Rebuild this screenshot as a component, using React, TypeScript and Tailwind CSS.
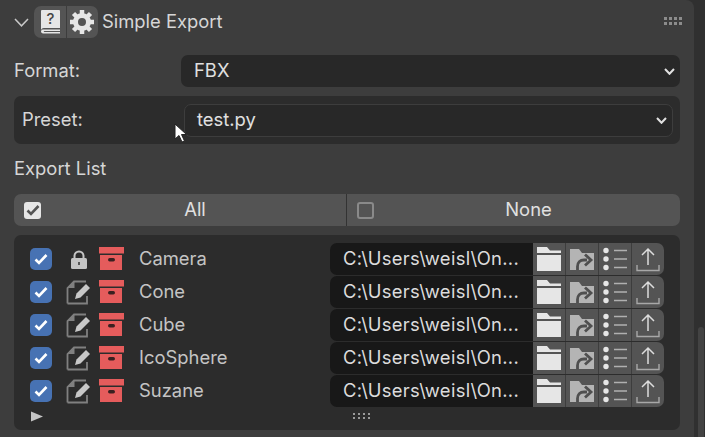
const font = { fontFamily: 'Inter' }

const rows = [
  { name: 'Camera', locked: true },
  { name: 'Cone', locked: false },
  { name: 'Cube', locked: false },
  { name: 'IcoSphere', locked: false },
  { name: 'Suzane', locked: false },
]

function Chevron({ w, h, color, sw }: { w: number; h: number; color: string; sw: number }) {
  return (
    <svg width={w} height={h} viewBox={`0 0 ${w} ${h}`}>
      <path d={`M1 1 ${w / 2} ${h - 1.2} ${w - 1} 1`} fill="none" stroke={color} strokeWidth={sw} />
    </svg>
  )
}

function BookIcon() {
  return (
    <svg width="24" height="26" viewBox="0 0 24 26">
      <path d="M4 1h17a1 1 0 0 1 1 1v17H6a3 3 0 0 0-3 2V2a1 1 0 0 1 1-1z" fill="#e6e6e6" />
      <path d="M3 22.500C3 20.800 4.500 20.500 6 20.500h16v1.400H6.500c-1 0-1 1.200 0 1.200H22v1.400H6c-1.500 0-3-.5-3-2z" fill="#e6e6e6" />
      <text x="12.500" y="15" textAnchor="middle" fontSize="15" fontWeight="500" fill="#444" fontFamily="Inter">?</text>
    </svg>
  )
}

function GearIcon() {
  return (
    <svg width="26" height="26" viewBox="0 0 26 26">
      <circle cx="13" cy="13" r="6.500" fill="none" stroke="#e6e6e6" strokeWidth="5" />
      <g stroke="#e6e6e6" strokeWidth="4.500">
        <path d="M13 1v5M13 20v5M1 13h5M20 13h5M4.500 4.500l3.500 3.500M18 18l3.500 3.500M21.500 4.500 18 8M8 18l-3.500 3.500" />
      </g>
    </svg>
  )
}

function GripIcon() {
  return (
    <svg width="20" height="10" viewBox="0 0 20 10">
      <g fill="#8c8c8c">
        <rect x="1" y="0" width="3" height="3" />
        <rect x="6" y="0" width="3" height="3" />
        <rect x="11" y="0" width="3" height="3" />
        <rect x="16" y="0" width="3" height="3" />
        <rect x="1" y="5" width="3" height="3" />
        <rect x="6" y="5" width="3" height="3" />
        <rect x="11" y="5" width="3" height="3" />
        <rect x="16" y="5" width="3" height="3" />
      </g>
    </svg>
  )
}

function CheckMark({ color }: { color: string }) {
  return (
    <svg width="14" height="12" viewBox="0 0 14 12">
      <path d="M1.500 6.500 5 10l7.500-8" fill="none" stroke={color} strokeWidth="2.600" />
    </svg>
  )
}

function LockIcon() {
  return (
    <svg width="18" height="20" viewBox="0 0 18 20">
      <path d="M4.500 9V6a4.500 4.500 0 0 1 9 0v3" fill="none" stroke="#c4c4c4" strokeWidth="2" />
      <rect x="1" y="8" width="16" height="11" rx="1.500" fill="#c4c4c4" />
      <rect x="8" y="12" width="2" height="3" fill="#555" />
    </svg>
  )
}

function EditIcon() {
  return (
    <svg width="26" height="25" viewBox="0 0 26 25">
      <path d="M1.500 23.500V8L8 1.500h12" fill="none" stroke="#808080" strokeWidth="1.800" />
      <path d="M1.500 23.500H21V16" fill="none" stroke="#808080" strokeWidth="1.800" />
      <path d="M2 8h6.500V1.500z" fill="#808080" />
      <path d="M9 19l1.500-5.500L20 4l4 4-9.500 9.500z" fill="#c8c8c8" />
    </svg>
  )
}

function BoxIcon() {
  return (
    <svg width="25" height="23" viewBox="0 0 25 23">
      <rect x="0" y="0" width="25" height="6.500" fill="#e55c5c" />
      <rect x="1" y="8" width="22" height="15" fill="#e55c5c" />
      <rect x="9" y="11" width="7" height="3.500" rx="1.700" fill="#3a2020" />
    </svg>
  )
}

function FolderIcon() {
  return (
    <svg width="26" height="24" viewBox="0 0 26 24">
      <path d="M1 0h10l3 3.500h11V6H1z" fill="#e6e6e6" />
      <rect x="1" y="8" width="24" height="16" fill="#e6e6e6" />
    </svg>
  )
}

function LinkFolderIcon() {
  return (
    <svg width="26" height="23" viewBox="0 0 26 23">
      <path d="M1 1h9l3 4h12v17H1z" fill="#b4b4b4" />
      <path d="M8.500 22v-3.500c0-4 2.500-6.500 6.500-6.500h3" fill="none" stroke="#4f4f4f" strokeWidth="2.800" />
      <path d="M16 6.500l6 5.500-6 5.500" fill="none" stroke="#4f4f4f" strokeWidth="2.800" />
    </svg>
  )
}

function ListIcon() {
  return (
    <svg width="26" height="24" viewBox="0 0 26 24">
      <g fill="#e6e6e6">
        <circle cx="4" cy="3.500" r="2.700" />
        <circle cx="4" cy="12" r="2.700" />
        <circle cx="4" cy="20.500" r="2.700" />
      </g>
      <path d="M12 3.500h13M12 12h13M12 20.500h13" stroke="#b0b0b0" strokeWidth="1.400" />
    </svg>
  )
}

function UploadIcon() {
  return (
    <svg width="24" height="25" viewBox="0 0 24 25">
      <path d="M12 18V2M6 8l6-6 6 6" fill="none" stroke="#dcdcdc" strokeWidth="1.500" />
      <path d="M1 18v5.500h22V18" fill="none" stroke="#a8a8a8" strokeWidth="1.400" />
    </svg>
  )
}

function Row({ name, locked }: { name: string; locked: boolean }) {
  return (
    <div className="flex h-[33px] items-center">
      <div className="mb-[2px] ml-[16px] flex h-[22px] w-[22px] items-center justify-center rounded-[5px] bg-[#4772b3]">
        <CheckMark color="#ffffff" />
      </div>
      <div className="ml-[14px] flex w-[26px] justify-center">{locked ? <LockIcon /> : <EditIcon />}</div>
      <div className="mb-[2px] ml-[7px] flex w-[25px] justify-center">
        <BoxIcon />
      </div>
      <div className="mb-[3px] ml-[15px] w-[191px] text-[#c4c4c4]">{name}</div>
      <div className="mb-[1px] flex h-[32px] w-[203px] items-center rounded-l-[7px] bg-[#181818] pb-[2px] pl-[13px] tracking-[0.3px] text-[#dcdcdc]">
        C:\Users\weisl\On...
      </div>
      <div className="mb-[1px] flex h-[32px] w-[131px] divide-x divide-[#3d3d3d] overflow-hidden rounded-r-[7px] bg-[#545454]">
        <div className="flex flex-1 items-center justify-center"><FolderIcon /></div>
        <div className="flex flex-1 items-center justify-center"><LinkFolderIcon /></div>
        <div className="flex flex-1 items-center justify-center"><ListIcon /></div>
        <div className="flex flex-1 items-center justify-center"><UploadIcon /></div>
      </div>
    </div>
  )
}

export default function App() {
  return (
    <div className="relative flex h-[437px] w-[705px] overflow-hidden bg-[#303030] text-[18.4px] leading-[25px]" style={font}>
      <div className="w-[694px] rounded-tr-[8px] bg-[#3d3d3d] px-[14px]">
        {/* Header */}
        <div className="flex h-[55px] items-center pb-[11px]">
          <Chevron w={15} h={9} color="#c8c8c8" sw={1.5} />
          <div className="ml-[5px] flex h-[32px] w-[64px] divide-x divide-[#3d3d3d] overflow-hidden rounded-[7px] bg-[#545454]">
            <div className="flex flex-1 items-center justify-center"><BookIcon /></div>
            <div className="flex flex-1 items-center justify-center"><GearIcon /></div>
          </div>
          <span className="mb-[2px] ml-[4px] text-[#d6d6d6]">Simple Export</span>
          <div className="ml-auto mr-[-3px]"><GripIcon /></div>
        </div>

        {/* Format */}
        <div className="flex h-[32px] items-center">
          <div className="mb-[2px] w-[167px] text-[#d6d6d6]">Format:</div>
          <div className="flex h-[32px] flex-1 items-center justify-between rounded-[7px] bg-[#282828] pl-[13px] pr-[5px] text-[#e0e0e0]">
            <span className="mb-[2px]">FBX</span>
            <Chevron w={11} h={7} color="#e0e0e0" sw={2} />
          </div>
        </div>

        {/* Preset */}
        <div className="mt-[9px] flex h-[48px] items-center rounded-[7px] bg-[#2c2c2c] pl-[8px] pr-[7px]">
          <div className="mb-[2px] w-[162px] text-[#d6d6d6]">Preset:</div>
          <div className="flex h-[33px] flex-1 items-center justify-between rounded-[7px] border border-[#3d3d3d] bg-[#282828] pl-[12px] pr-[5px] text-[#e0e0e0]">
            <span className="mb-[2px]">test.py</span>
            <Chevron w={11} h={7} color="#e0e0e0" sw={2} />
          </div>
        </div>

        <div className="mt-[12px] h-[26px] text-[#d6d6d6]">Export List</div>

        {/* All / None */}
        <div className="mt-[12px] flex h-[32px] divide-x divide-[#333333] overflow-hidden rounded-[7px] bg-[#545454] text-[#e0e0e0]">
          <div className="relative flex w-[333px] items-center justify-center pl-[30px]">
            <div className="absolute left-[10px] flex h-[17px] w-[17px] items-center justify-center rounded-[3px] bg-[#e6e6e6]">
              <CheckMark color="#545454" />
            </div>
            <span className="mb-[2px]">All</span>
          </div>
          <div className="relative flex flex-1 items-center justify-center pl-[30px]">
            <div className="absolute left-[10px] h-[17px] w-[17px] rounded-[3px] border-2 border-[#8a8a8a]" />
            <span className="mb-[2px]">None</span>
          </div>
        </div>

        {/* List */}
        <div className="mt-[9px] h-[195px] rounded-[7px] bg-[#2c2c2c] pt-[8px]">
          {rows.map((row) => (
            <Row key={row.name} name={row.name} locked={row.locked} />
          ))}
          <div className="relative flex h-[16px] items-center pl-[16px]">
            <svg width="14" height="11" viewBox="0 0 14 11">
              <path d="M1 0.500 13 5.500 1 10.500z" fill="#c4c4c4" />
            </svg>
            <div className="absolute left-[338px] top-[5px]">
              <svg width="20" height="8" viewBox="0 0 20 8">
                <g fill="#9a9a9a">
                  <rect x="1" y="0" width="2" height="2" />
                  <rect x="6" y="0" width="2" height="2" />
                  <rect x="11" y="0" width="2" height="2" />
                  <rect x="16" y="0" width="2" height="2" />
                  <rect x="1" y="4" width="2" height="2" />
                  <rect x="6" y="4" width="2" height="2" />
                  <rect x="11" y="4" width="2" height="2" />
                  <rect x="16" y="4" width="2" height="2" />
                </g>
              </svg>
            </div>
          </div>
        </div>
      </div>

      {/* Scrollbar */}
      <div className="flex flex-1 flex-col justify-end pl-[4px] pr-[1px]">
        <div className="h-[110px] rounded-t-[3px] bg-[#434343]" />
      </div>

      {/* Mouse cursor */}
      <svg className="absolute left-[174px] top-[123px]" width="14" height="21" viewBox="0 0 14 21">
        <path d="M1 1v15l4-3.500 3 6.500 2.500-1-3-6.500h5z" fill="#ffffff" stroke="#222222" strokeWidth="1" />
      </svg>
    </div>
  )
}
